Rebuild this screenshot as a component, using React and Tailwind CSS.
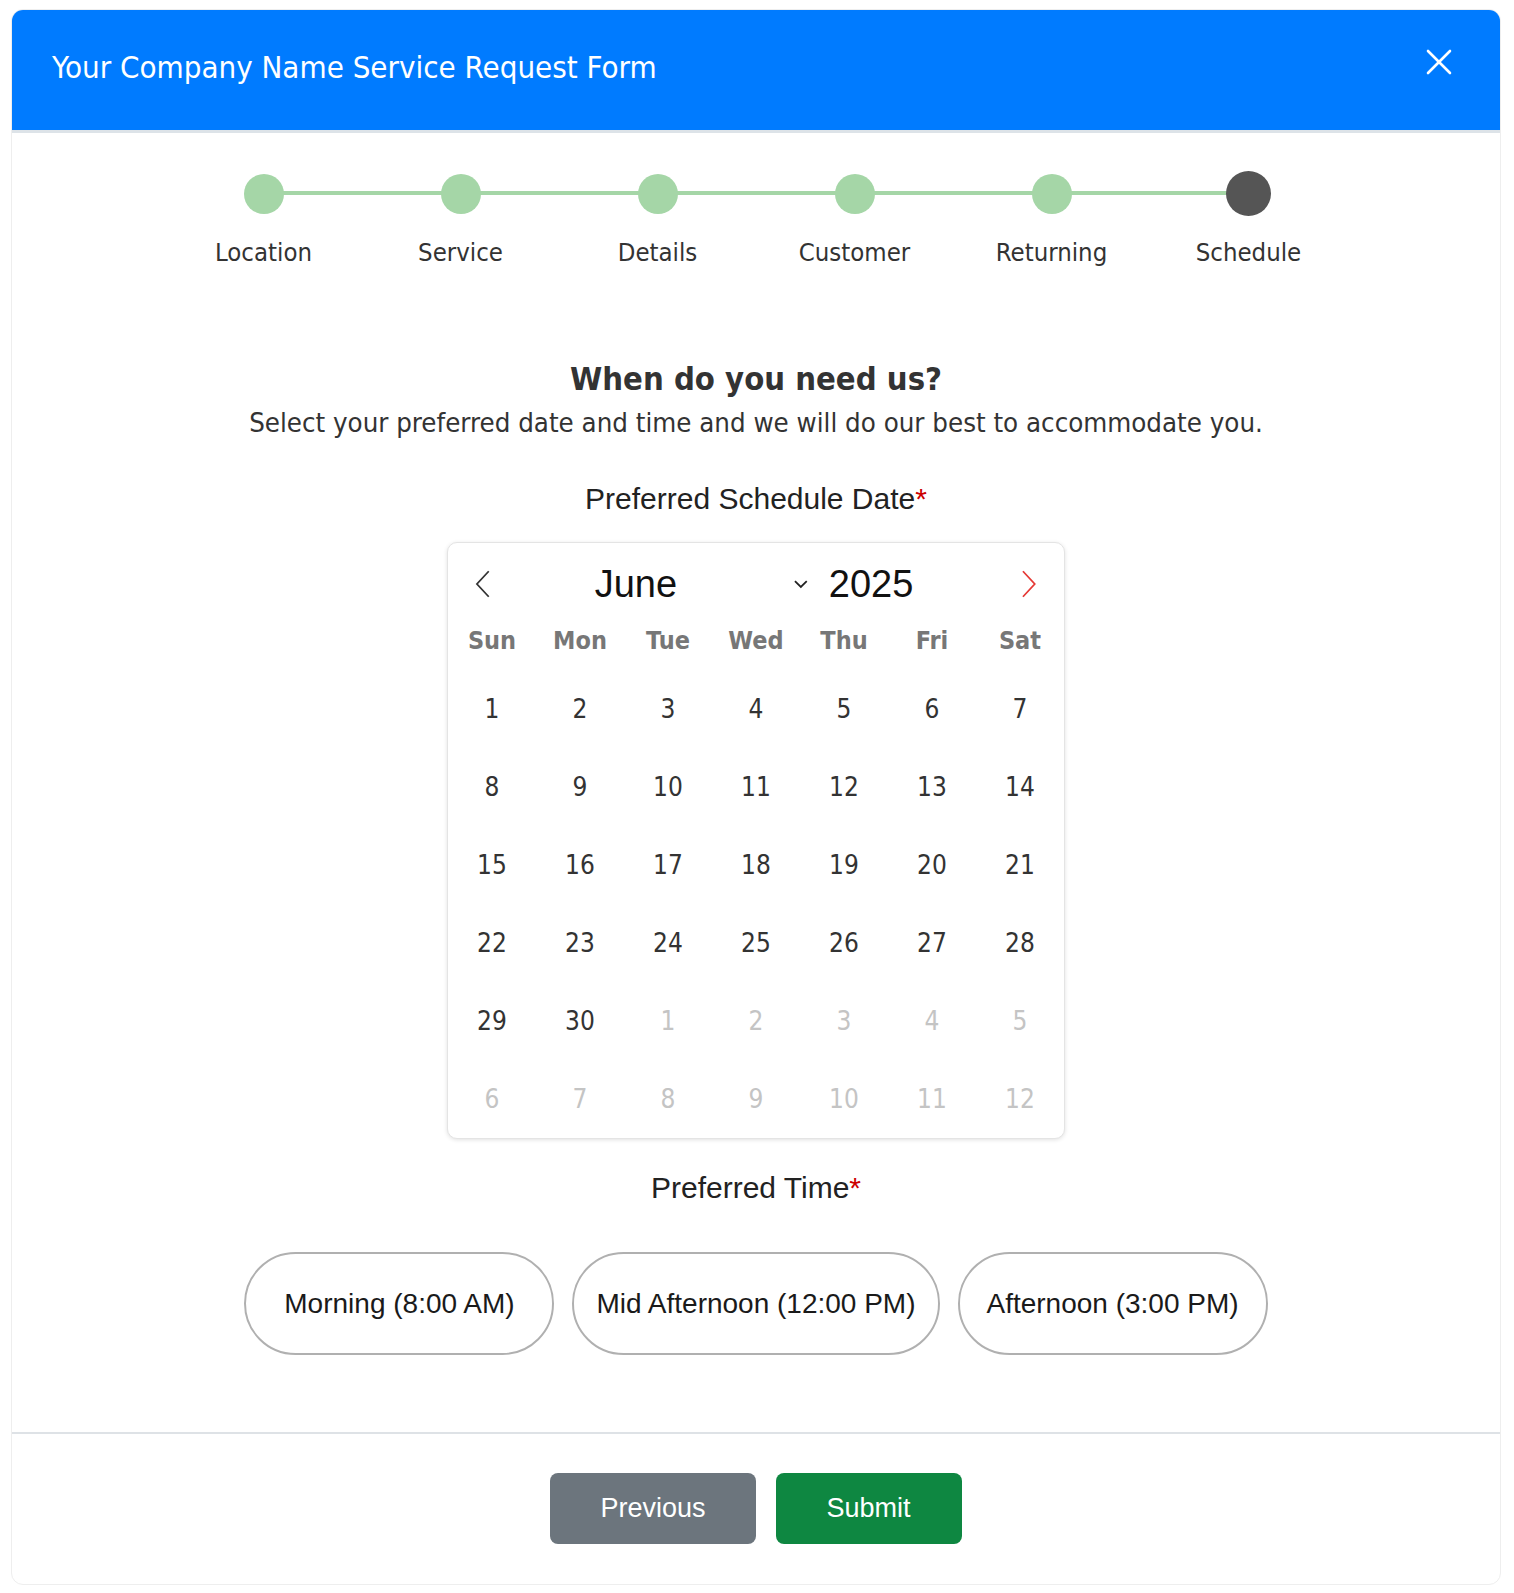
import React from 'react';

const steps = ['Location', 'Service', 'Details', 'Customer', 'Returning', 'Schedule'];
const weekdays = ['Sun', 'Mon', 'Tue', 'Wed', 'Thu', 'Fri', 'Sat'];
const times = ['Morning (8:00 AM)', 'Mid Afternoon (12:00 PM)', 'Afternoon (3:00 PM)'];

// June 2025 starts on a Sunday; pad with July days to fill 6 rows
const days = [
  ...Array.from({ length: 30 }, (_, i) => ({ n: i + 1, out: false })),
  ...Array.from({ length: 12 }, (_, i) => ({ n: i + 1, out: true })),
];

const cond = "font-['DejaVu_Sans_Condensed','DejaVu_Sans',sans-serif]";
const arial = "font-['Liberation_Sans',Arial,sans-serif]";

const Stepper = () => (
  <div className="flex justify-center pt-[38px]">
    {steps.map((label, i) => {
      const last = i === steps.length - 1;
      return (
        <div key={label} className="relative flex w-[197px] flex-col items-center">
          {!last && <div className="absolute left-1/2 top-[20px] h-[4px] w-full bg-[#a5d6a7]" />}
          <div className="relative z-10 flex h-[45px] w-[45px] items-center justify-center">
            {last ? (
              <div className="h-[45px] w-[45px] rounded-full bg-[#555555]" />
            ) : (
              <div className="h-[40px] w-[40px] rounded-full bg-[#a5d6a7]" />
            )}
          </div>
          <div className={`${cond} mt-[21px] text-[25.5px] leading-[30px] text-[#333]`}>{label}</div>
        </div>
      );
    })}
  </div>
);

const Calendar = () => (
  <div className="mt-[25px] w-[618px] rounded-[10px] border border-[#e4e4e4] bg-white pt-[16px] shadow-[0_1px_4px_rgba(0,0,0,0.12)]">
    <div className={`${arial} flex h-[50px] items-center px-[26px] text-[38px] text-[#111]`}>
      <svg width="18" height="30" viewBox="0 0 18 30" fill="none" stroke="#333" strokeWidth="1.8">
        <polyline points="15,2 3,15 15,28" />
      </svg>
      <span className="ml-[103px] leading-none">June</span>
      <svg className="ml-[116px]" width="16" height="10" viewBox="0 0 16 10" fill="none" stroke="#222" strokeWidth="1.8">
        <polyline points="2,2 8,8 14,2" />
      </svg>
      <span className="ml-[20px] leading-none">2025</span>
      <svg className="ml-[107px]" width="18" height="30" viewBox="0 0 18 30" fill="none" stroke="#e53935" strokeWidth="1.8">
        <polyline points="3,2 15,15 3,28" />
      </svg>
    </div>
    <div className={`${cond} mt-[12px] grid h-[40px] grid-cols-7 items-center text-[25px] font-bold text-[#777]`}>
      {weekdays.map((d) => (
        <div key={d} className="text-center">{d}</div>
      ))}
    </div>
    <div className={`${cond} mt-[9px] grid grid-cols-7 text-[26px]`}>
      {days.map((d, i) => (
        <div
          key={i}
          className={`flex h-[78px] items-center justify-center ${d.out ? 'text-[#c4c4c4]' : 'text-[#333]'}`}
        >
          {d.n}
        </div>
      ))}
    </div>
  </div>
);

export default function App() {
  return (
    <div className="min-h-screen bg-white pt-[9px]">
      <div className="ml-[11px] w-[1490px] overflow-hidden rounded-[12px] border border-[#eeeeee] bg-white">
        <div className="flex h-[123px] items-center justify-between border-b-[3px] border-[#dde3e8] bg-[#007bff] pl-[40px] pr-[48px]">
          <h1 className={`${cond} pb-[6px] text-[31px] text-white`}>Your Company Name Service Request Form</h1>
          <button type="button" aria-label="Close" className="mb-[16px]">
            <svg width="26" height="26" viewBox="0 0 26 26" fill="none" stroke="white" strokeWidth="2.6" strokeLinecap="round">
              <line x1="2" y1="2" x2="24" y2="24" />
              <line x1="24" y1="2" x2="2" y2="24" />
            </svg>
          </button>
        </div>

        <div className="flex flex-col items-center pb-[77px]">
          <div className="w-full">
            <Stepper />
          </div>

          <h2 className={`${cond} mt-[93px] text-[32.5px] font-bold leading-[38px] text-[#333]`}>When do you need us?</h2>
          <p className={`${cond} mt-[9px] text-[27.4px] leading-[32px] text-[#333]`}>
            Select your preferred date and time and we will do our best to accommodate you.
          </p>

          <div className={`${arial} mt-[42px] text-[30px] leading-[36px] text-[#222]`}>
            Preferred Schedule Date<span className="text-[#cc0000]">*</span>
          </div>

          <Calendar />

          <div className={`${arial} mt-[31px] text-[30px] leading-[36px] text-[#222]`}>
            Preferred Time<span className="text-[#cc0000]">*</span>
          </div>

          <div className="mt-[46px] flex gap-[18px]">
            {times.map((t) => (
              <button
                key={t}
                type="button"
                className={`${arial} h-[103px] min-w-[310px] rounded-full border-2 border-[#b0b0b0] bg-white px-[22px] text-[28px] text-[#1a1a1a]`}
              >
                {t}
              </button>
            ))}
          </div>
        </div>

        <div className="flex justify-center gap-[20px] border-t-2 border-[#dee2e6] pb-[40px] pt-[39px]">
          <button type="button" className={`${arial} h-[71px] rounded-[8px] bg-[#6c757d] px-[50px] text-[27px] text-white`}>
            Previous
          </button>
          <button type="button" className={`${arial} h-[71px] rounded-[8px] bg-[#0e8741] px-[51px] text-[27px] text-white`}>
            Submit
          </button>
        </div>
      </div>
    </div>
  );
}
